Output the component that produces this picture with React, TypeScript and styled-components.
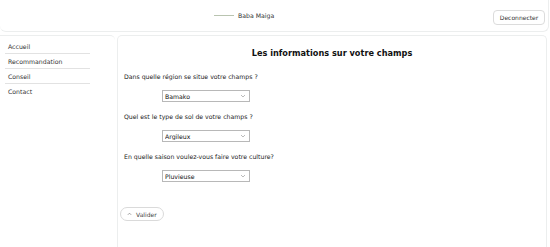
import styled, { createGlobalStyle } from "styled-components";

const GlobalStyle = createGlobalStyle`
  html, body {
    margin: 0;
    padding: 0;
    background: #fff;
  }
  body {
    font-family: "Comic Sans MS", "DejaVu Sans", sans-serif;
    color: #222;
  }
`;

const Page = styled.div`
  display: flex;
  flex-direction: column;
  width: 550px;
  height: 247px;
  overflow: hidden;
`;

const Header = styled.header`
  display: flex;
  align-items: center;
  height: 32px;
  margin-right: 1px;
  padding: 0 3px 0 214px;
  box-sizing: border-box;
  border: 1px solid #eceeee;
  border-top: none;
  border-left: none;
  border-radius: 0 0 6px 6px;
`;

const User = styled.div`
  display: flex;
  align-items: center;
  gap: 4px;
  flex: 1;
  font-size: 6.2px;
  color: #333;

  &::before {
    content: "";
    width: 20px;
    height: 1px;
    background: #b9c4b0;
  }
`;

const LogoutButton = styled.button`
  font-family: inherit;
  font-size: 6px;
  color: #333;
  background: #fff;
  border: 1px solid #dcdcdc;
  border-radius: 4px;
  padding: 2px 4px;
  width: 52px;
  height: 15px;
  margin-top: 4px;
`;

const Body = styled.div`
  display: flex;
  flex: 1;
  gap: 2px;
  margin-top: 3px;
`;

const Sidebar = styled.nav`
  display: flex;
  flex-direction: column;
  width: 115px;
  padding: 3px 25px 0 5px;
  box-sizing: border-box;
  border-top: 1px solid #eceeee;
  border-top-right-radius: 5px;
`;

const NavItem = styled.a`
  display: block;
  padding: 4px 3px 3px;
  font-size: 6.2px;
  color: #333;
  text-decoration: none;
  border-bottom: 1px solid #e2e2e2;

  &:last-child {
    border-bottom: none;
  }
`;

const Main = styled.main`
  flex: 1;
  margin-right: 3px;
  padding: 11px 6px 0 6px;
  border: 1px solid #eceeee;
  border-bottom: none;
  border-radius: 5px 5px 0 0;
  display: flex;
  flex-direction: column;
`;

const Title = styled.h2`
  margin: 1px 0 15px;
  font-family: "DejaVu Sans Condensed", "DejaVu Sans", sans-serif;
  font-stretch: condensed;
  font-size: 9.1px;
  font-weight: bold;
  text-align: center;
  color: #111;
`;

const Field = styled.div`
  display: flex;
  flex-direction: column;
  gap: 10px;
  margin-bottom: 11px;
`;

const Label = styled.label`
  font-size: 6.2px;
  color: #222;
`;

const Select = styled.select`
  margin-left: 38px;
  width: 88px;
  height: 12px;
  padding: 0 2px;
  font-family: inherit;
  font-size: 6.2px;
  color: #111;
  background: #fff;
  border: 1px solid #b8b8b8;
  border-radius: 0;
  appearance: none;
  background-image: url("data:image/svg+xml;utf8,<svg xmlns='http://www.w3.org/2000/svg' width='6' height='4'><path d='M1 1l2 2 2-2' fill='none' stroke='%23aaa' stroke-width='0.8'/></svg>");
  background-repeat: no-repeat;
  background-position: right 3px center;
`;

const Submit = styled.button`
  display: flex;
  align-items: center;
  gap: 4px;
  align-self: flex-start;
  margin: 14px 0 0 -4px;
  height: 14px;
  padding: 0 6px;
  font-family: inherit;
  font-size: 6px;
  color: #444;
  background: #fff;
  border: 1px solid #dadada;
  border-radius: 8px;
`;

const Caret = styled.svg`
  width: 5px;
  height: 4px;
`;

const fields = [
  { label: "Dans quelle région se situe votre champs ?", value: "Bamako" },
  { label: "Quel est le type de sol de votre champs ?", value: "Argileux" },
  { label: "En quelle saison voulez-vous faire votre culture?", value: "Pluvieuse" },
];

export default function App() {
  return (
    <Page>
      <GlobalStyle />
      <Header>
        <User>Baba Maiga</User>
        <LogoutButton>Deconnecter</LogoutButton>
      </Header>
      <Body>
        <Sidebar>
          <NavItem href="#">Accueil</NavItem>
          <NavItem href="#">Recommandation</NavItem>
          <NavItem href="#">Conseil</NavItem>
          <NavItem href="#">Contact</NavItem>
        </Sidebar>
        <Main>
          <Title>Les informations sur votre champs</Title>
          {fields.map((f) => (
            <Field key={f.value}>
              <Label>{f.label}</Label>
              <Select defaultValue={f.value}>
                <option>{f.value}</option>
              </Select>
            </Field>
          ))}
          <Submit>
            <Caret viewBox="0 0 6 4">
              <path d="M1 3l2-2 2 2" fill="none" stroke="#777" strokeWidth="0.8" />
            </Caret>
            Valider
          </Submit>
        </Main>
      </Body>
    </Page>
  );
}
